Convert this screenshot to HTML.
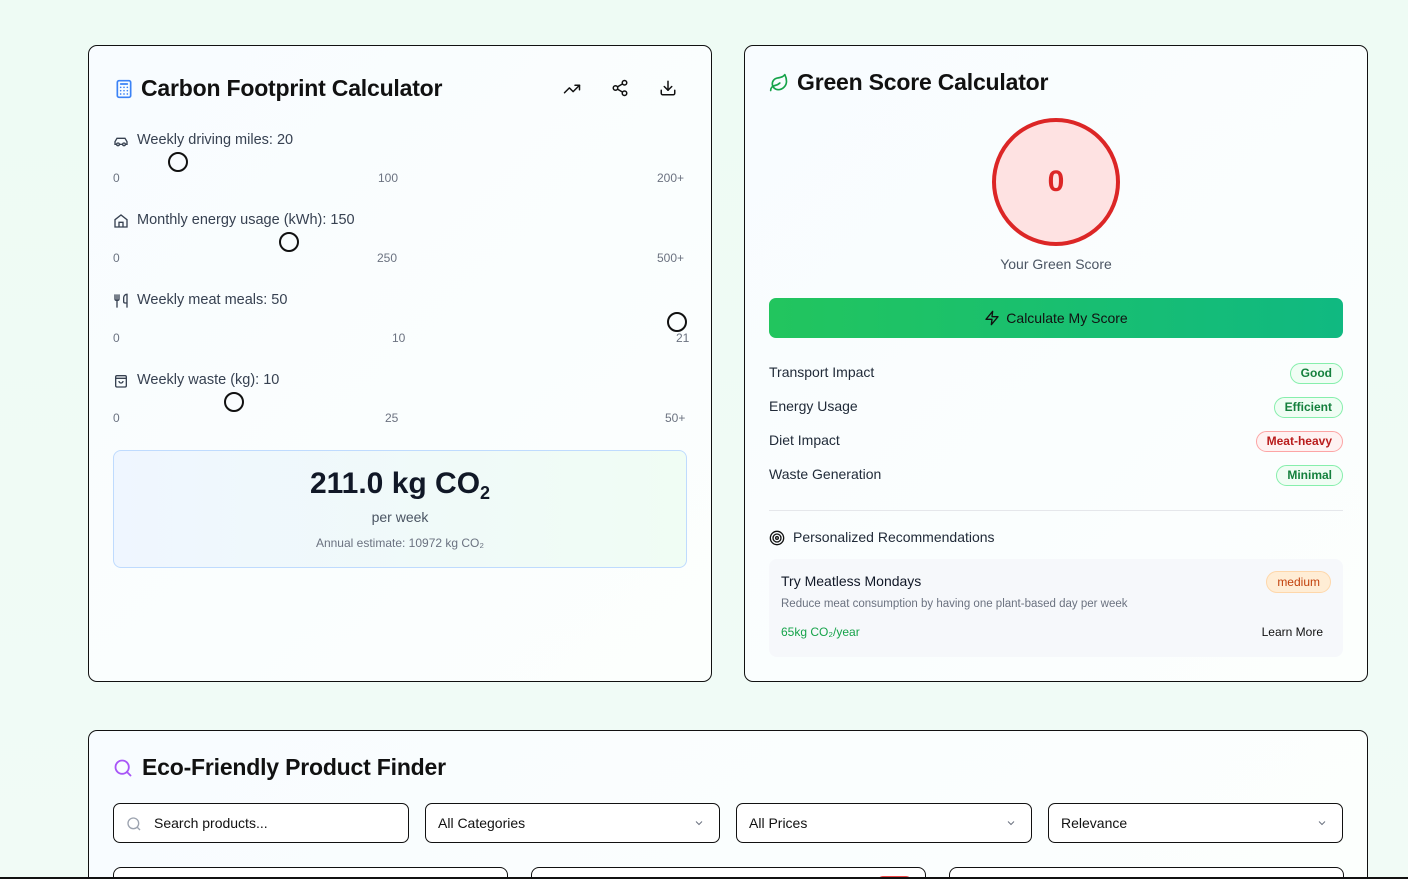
<!DOCTYPE html>
<html><head><meta charset="utf-8"><style>
*{box-sizing:border-box;margin:0;padding:0}
html,body{width:1408px;height:879px;overflow:hidden}
body{font-family:"Liberation Sans",sans-serif;background:linear-gradient(180deg,#eefbf4,#f1fbf6);position:relative;color:#111827}
#wrap{position:absolute;left:0;top:0;width:1408px;height:879px;overflow:hidden}
.card{position:absolute;border:1px solid #111;border-radius:9px;background:linear-gradient(135deg,#f8fcff,#fcfffd)}
.abs{position:absolute}
.t{position:absolute;white-space:nowrap}
svg{position:absolute}
.lbl{font-size:14.5px;color:#374151}
.tick{font-size:12px;color:#6b7280}
.thumb{position:absolute;width:20px;height:20px;border:2px solid #111;border-radius:50%;background:transparent}
.badge{position:absolute;height:21px;border-radius:11px;font-size:12px;font-weight:bold;padding:0 10px;line-height:19px;right:24px}
.row{font-size:14px;color:#1f2937}
.inp{position:absolute;top:72px;height:40px;border:1px solid #111;border-radius:7px;background:#fff;font-size:14px;line-height:38px;padding-left:12px;color:#111}
.chev{position:absolute;right:14px;top:13px}
.h{font-size:23px;font-weight:bold;color:#111;letter-spacing:-0.2px}
</style></head><body><div id="wrap">

<div class="card" style="left:88px;top:45px;width:624px;height:637px">
  <svg style="left:25px;top:33px" width="20" height="20" viewBox="0 0 24 24" fill="none" stroke="#3b82f6" stroke-width="2" stroke-linecap="round"><rect x="4" y="2" width="16" height="20" rx="2"/><line x1="8" y1="6" x2="16" y2="6"/><path d="M8 10h.01M12 10h.01M16 10h.01M8 14h.01M12 14h.01M16 14h.01M8 18h.01M12 18h.01M16 18h.01"/></svg>
  <div class="t h" style="left:52px;top:29px">Carbon Footprint Calculator</div>
  <svg style="left:474px;top:34px" width="18" height="18" viewBox="0 0 24 24" fill="none" stroke="#111" stroke-width="2" stroke-linecap="round" stroke-linejoin="round"><polyline points="22 7 13.5 15.5 8.5 10.5 2 17"/><polyline points="16 7 22 7 22 13"/></svg>
  <svg style="left:522px;top:33px" width="18" height="18" viewBox="0 0 24 24" fill="none" stroke="#111" stroke-width="2"><circle cx="18" cy="5" r="3"/><circle cx="6" cy="12" r="3"/><circle cx="18" cy="19" r="3"/><line x1="8.6" y1="13.5" x2="15.4" y2="17.5"/><line x1="15.4" y1="6.5" x2="8.6" y2="10.5"/></svg>
  <svg style="left:570px;top:33px" width="18" height="18" viewBox="0 0 24 24" fill="none" stroke="#111" stroke-width="2" stroke-linecap="round" stroke-linejoin="round"><path d="M21 15v4a2 2 0 0 1-2 2H5a2 2 0 0 1-2-2v-4"/><polyline points="7 10 12 15 17 10"/><line x1="12" y1="15" x2="12" y2="3"/></svg>

  <svg style="left:24px;top:87px" width="16" height="16" viewBox="0 0 24 24" fill="none" stroke="#374151" stroke-width="2"><path d="M19 17h2v-4l-3-5H6L3 13v4h2"/><circle cx="7.5" cy="17" r="2"/><circle cx="16.5" cy="17" r="2"/><path d="M9.5 17h5"/></svg>
  <div class="t lbl" style="left:48px;top:86px">Weekly driving miles: 20</div>
  <div class="thumb" style="left:79px;top:106px"></div>
  <div class="t tick" style="left:24px;top:125px">0</div><div class="t tick" style="left:289px;top:125px">100</div><div class="t tick" style="left:568px;top:125px">200+</div>
  <svg style="left:24px;top:167px" width="16" height="16" viewBox="0 0 24 24" fill="none" stroke="#374151" stroke-width="2"><path d="M3 10l9-7 9 7v11H3z"/><path d="M9 21v-7h6v7"/></svg>
  <div class="t lbl" style="left:48px;top:166px">Monthly energy usage (kWh): 150</div>
  <div class="thumb" style="left:190px;top:186px"></div>
  <div class="t tick" style="left:24px;top:205px">0</div><div class="t tick" style="left:288px;top:205px">250</div><div class="t tick" style="left:568px;top:205px">500+</div>
  <svg style="left:24px;top:247px" width="16" height="16" viewBox="0 0 24 24" fill="none" stroke="#374151" stroke-width="2"><path d="M3 2v7c0 1.1.9 2 2 2h2a2 2 0 0 0 2-2V2M6 2v20M21 15V2a5 5 0 0 0-5 5v6c0 1.1.9 2 2 2h3zm0 0v7"/></svg>
  <div class="t lbl" style="left:48px;top:246px">Weekly meat meals: 50</div>
  <div class="thumb" style="left:578px;top:266px"></div>
  <div class="t tick" style="left:24px;top:285px">0</div><div class="t tick" style="left:303px;top:285px">10</div><div class="t tick" style="left:587px;top:285px">21</div>
  <svg style="left:24px;top:327px" width="16" height="16" viewBox="0 0 24 24" fill="none" stroke="#374151" stroke-width="2"><rect x="4" y="4" width="16" height="17" rx="2"/><path d="M4 8h16M9 12a3 3 0 0 0 6 0"/></svg>
  <div class="t lbl" style="left:48px;top:326px">Weekly waste (kg): 10</div>
  <div class="thumb" style="left:135px;top:346px"></div>
  <div class="t tick" style="left:24px;top:365px">0</div><div class="t tick" style="left:296px;top:365px">25</div><div class="t tick" style="left:576px;top:365px">50+</div>

  <div class="abs" style="left:24px;top:404px;width:574px;height:118px;border:1px solid #bfdbfe;border-radius:8px;background:linear-gradient(90deg,#eff6ff,#f0fdf4);text-align:center">
    <div class="t" style="left:0;width:572px;top:16px;font-size:30px;font-weight:bold;color:#111827;line-height:34px">211.0 kg CO<span style="font-size:18px;position:relative;top:6px">2</span></div>
    <div class="t" style="left:0;width:572px;top:58px;font-size:14px;color:#4b5563">per week</div>
    <div class="t" style="left:0;width:572px;top:85px;font-size:12px;color:#6b7280">Annual estimate: 10972 kg CO₂</div>
  </div>
</div>

<div class="card" style="left:744px;top:45px;width:624px;height:637px">
  <svg style="left:24px;top:27px" width="20" height="20" viewBox="0 0 24 24" fill="none" stroke="#16a34a" stroke-width="2" stroke-linecap="round" stroke-linejoin="round"><path d="M11 20A7 7 0 0 1 9.8 6.1C15.5 5 17 4.5 19 2c1 2 2 4.2 2 8 0 5.5-4.8 10-10 10Z"/><path d="M2 21c0-3 1.9-5.4 5.1-6C9.5 14.5 12 13 13 12"/></svg>
  <div class="t h" style="left:52px;top:23px">Green Score Calculator</div>
  <div class="abs" style="left:247px;top:72px;width:128px;height:128px;border:4px solid #dc2626;border-radius:50%;background:#fee2e2;text-align:center;line-height:120px;font-size:30px;font-weight:bold;color:#dc2626">0</div>
  <div class="t" style="left:0;width:622px;text-align:center;top:210px;font-size:14px;color:#4b5563">Your Green Score</div>
  <div class="abs" style="left:24px;top:252px;width:574px;height:40px;border-radius:7px;background:linear-gradient(90deg,#22c55e,#10b981);text-align:center;line-height:40px;font-size:14px;color:#111">
    <svg style="position:relative;display:inline-block;vertical-align:-3px;margin-right:6px" width="16" height="16" viewBox="0 0 24 24" fill="none" stroke="#111" stroke-width="2" stroke-linejoin="round"><polygon points="13 2 3 14 12 14 11 22 21 10 12 10 13 2"/></svg>Calculate My Score</div>
  <div class="t row" style="left:24px;top:318px">Transport Impact</div>
  <div class="badge" style="top:317px;border:1px solid #86efac;color:#15803d;background:#f0fdf4">Good</div>
  <div class="t row" style="left:24px;top:352px">Energy Usage</div>
  <div class="badge" style="top:351px;border:1px solid #86efac;color:#15803d;background:#f0fdf4">Efficient</div>
  <div class="t row" style="left:24px;top:386px">Diet Impact</div>
  <div class="badge" style="top:385px;border:1px solid #fca5a5;color:#b91c1c;background:#fef2f2">Meat-heavy</div>
  <div class="t row" style="left:24px;top:420px">Waste Generation</div>
  <div class="badge" style="top:419px;border:1px solid #86efac;color:#15803d;background:#f0fdf4">Minimal</div>
  <div class="abs" style="left:24px;top:464px;width:574px;height:1px;background:#e5e7eb"></div>
  <svg style="left:24px;top:484px" width="16" height="16" viewBox="0 0 24 24" fill="none" stroke="#111" stroke-width="2"><circle cx="12" cy="12" r="10"/><circle cx="12" cy="12" r="6"/><circle cx="12" cy="12" r="2"/></svg>
  <div class="t" style="left:48px;top:483px;font-size:14px;color:#1f2937">Personalized Recommendations</div>
  <div class="abs" style="left:24px;top:513px;width:574px;height:98px;border-radius:8px;background:#f6f8fb">
    <div class="t" style="left:12px;top:14px;font-size:14px;color:#111827">Try Meatless Mondays</div>
    <div class="t" style="right:12px;top:12px;height:22px;padding:0 10px;border:1px solid #fed7aa;background:#ffedd5;border-radius:11px;font-size:12px;line-height:20px;color:#c2410c">medium</div>
    <div class="t" style="left:12px;top:39px;font-size:11.5px;color:#6b7280">Reduce meat consumption by having one plant-based day per week</div>
    <div class="t" style="left:12px;top:66px;font-size:12px;color:#16a34a">65kg CO₂/year</div>
    <div class="t" style="right:20px;top:66px;font-size:12px;color:#111">Learn More</div>
  </div>
</div>

<div class="card" style="left:88px;top:730px;width:1280px;height:149px;border-bottom:none;border-radius:9px 9px 0 0;overflow:hidden">
  <svg style="left:24px;top:27px" width="20" height="20" viewBox="0 0 24 24" fill="none" stroke="#a855f7" stroke-width="2.2" stroke-linecap="round"><circle cx="11" cy="11" r="8"/><line x1="21" y1="21" x2="16.65" y2="16.65"/></svg>
  <div class="t h" style="left:53px;top:23px">Eco-Friendly Product Finder</div>
  <div class="inp" style="left:24px;width:296px;padding-left:40px"><svg style="left:12px;top:12px" width="16" height="16" viewBox="0 0 24 24" fill="none" stroke="#9ca3af" stroke-width="2"><circle cx="11" cy="11" r="8"/><line x1="21" y1="21" x2="16.65" y2="16.65"/></svg>Search products...</div>
  <div class="inp" style="left:336px;width:295px">All Categories<svg class="chev" width="12" height="12" viewBox="0 0 24 24" fill="none" stroke="#6b7280" stroke-width="2"><polyline points="6 9 12 15 18 9"/></svg></div>
  <div class="inp" style="left:647px;width:296px">All Prices<svg class="chev" width="12" height="12" viewBox="0 0 24 24" fill="none" stroke="#6b7280" stroke-width="2"><polyline points="6 9 12 15 18 9"/></svg></div>
  <div class="inp" style="left:959px;width:295px">Relevance<svg class="chev" width="12" height="12" viewBox="0 0 24 24" fill="none" stroke="#6b7280" stroke-width="2"><polyline points="6 9 12 15 18 9"/></svg></div>
  <div class="abs" style="left:24px;top:136px;width:395px;height:40px;border:1px solid #111;border-radius:8px;background:#fff"></div>
  <div class="abs" style="left:442px;top:136px;width:395px;height:40px;border:1px solid #111;border-radius:8px;background:#fff"><div class="abs" style="left:345px;top:8px;width:35px;height:12px;background:#ef4444;border-radius:6px"></div></div>
  <div class="abs" style="left:860px;top:136px;width:395px;height:40px;border:1px solid #111;border-radius:8px;background:#fff"></div>
</div>
<div class="abs" style="left:0;top:877px;width:1408px;height:2px;background:#111"></div>
</div></body></html>
